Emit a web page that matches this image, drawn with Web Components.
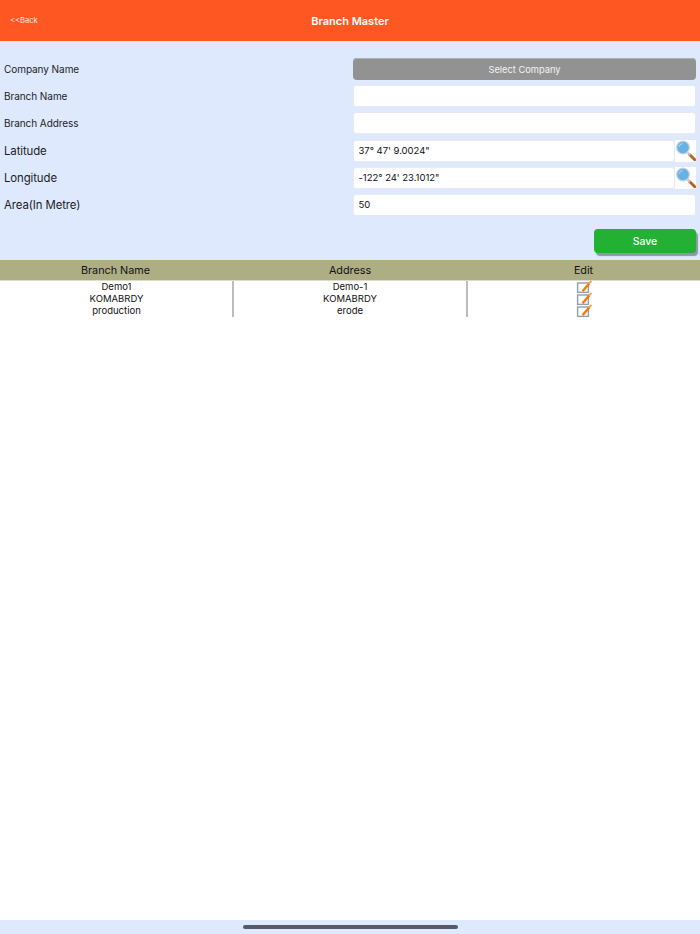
<!DOCTYPE html>
<html><head><meta charset="utf-8"><style>
html,body{margin:0;padding:0;height:100%}
body{font-family:Inter,"Liberation Sans",sans-serif;background:#fff}
</style></head><body>
<app-shell>
<top-bar slot="top" title="Branch Master" back="&lt;&lt;Back"></top-bar>
<form-panel slot="form">
<form-row label="Company Name"><pick-button>Select Company</pick-button></form-row>
<form-row label="Branch Name"><text-box></text-box></form-row>
<form-row label="Branch Address"><text-box></text-box></form-row>
<form-row label="Latitude" big><text-box value="37° 47' 9.0024&quot;" search></text-box></form-row>
<form-row label="Longitude" big><text-box value="-122° 24' 23.1012&quot;" search></text-box></form-row>
<form-row label="Area(In Metre)" big><text-box value="50"></text-box></form-row>
<save-button>Save</save-button>
</form-panel>
<branch-table slot="table"></branch-table>
<home-bar slot="bottom"></home-bar>
</app-shell>
<script>
function def(name,css,html){
  customElements.define(name,class extends HTMLElement{
    connectedCallback(){
      if(this.shadowRoot)return;
      const r=this.attachShadow({mode:'open'});
      r.innerHTML='<style>'+css+'</style>'+(typeof html==='function'?html(this):html);
    }
  });
}
def('app-shell',':host{display:flex;flex-direction:column;height:934px;width:700px;overflow:hidden}.m{flex:1;background:#fff;display:flex;flex-direction:column}',
 '<slot name="top"></slot><slot name="form"></slot><div class="m"><slot name="table"></slot></div><slot name="bottom"></slot>');
def('top-bar',':host{display:grid;grid-template-columns:1fr auto 1fr;align-items:center;height:41px;background:#FF5722;color:#fff}.b{font-size:7.6px;padding-left:10px;color:#ffe9e0}.t{font-size:11px;font-weight:600}',
 e=>`<div class="b">${e.getAttribute('back').replace('<','&lt;').replace('<','&lt;')}</div><div class="t">${e.getAttribute('title')}</div><div></div>`);
def('form-panel',':host{display:flex;flex-direction:column;background:#DEE9FD;padding:17px 4px 6.9px;gap:5.2px}',
 '<slot></slot>');
def('form-row',':host{display:grid;grid-template-columns:349px 1fr;align-items:center;height:22px;color:#1c1c1e}.l{font-size:10px;letter-spacing:-.06px}:host([big]) .l{font-size:11.4px;letter-spacing:-.1px;padding-top:1px}',
 e=>`<div class="l">${e.getAttribute('label')}</div><div><slot></slot></div>`);
def('pick-button',':host{display:flex;align-items:center;justify-content:center;height:22px;border-radius:4px;background:#929292;color:#f2f2f2;font-size:9.3px;box-shadow:inset 0 1px 0 #a8b0bc}','<slot></slot>');
const glass=`<svg width="20" height="22" viewBox="0 0 20 22"><path d="M13.5 14.5L18.8 19.8" stroke="#b5601f" stroke-width="2.8" stroke-linecap="round"/><path d="M11.5 12.5L14 15" stroke="#c4c4c4" stroke-width="2.2"/><circle cx="7" cy="7.5" r="6.3" fill="#67b1e4" stroke="#c2d2df" stroke-width="1.2"/><path d="M3.2 7a4 4 0 0 1 3.6-3.4" stroke="#9ed0f1" stroke-width="1.2" fill="none"/></svg>`;
def('text-box',':host{display:flex;height:22px;font-size:9.5px;letter-spacing:-.03px;color:#111}.f{flex:1;min-width:0;background:#fff;border-radius:3px;border:1px solid #e6ebf3;box-sizing:border-box;display:flex;align-items:center;padding-left:4.5px}.s{width:21px;background:#fff;display:flex;align-items:flex-start;justify-content:flex-end;overflow:visible}svg{flex:none}',
 e=>`<div class="f">${e.getAttribute('value')||''}</div>${e.hasAttribute('search')?`<div class="s">${glass}</div>`:''}`);
def('save-button',':host{align-self:flex-end;display:flex;align-items:center;justify-content:center;width:102px;height:24px;margin-top:7.95px;border-radius:4px;background:#22B133;color:#fff;font-size:10.5px;font-weight:500;box-shadow:2px 3px 1px #8d95a8}','<slot></slot>');
const edit=`<svg width="16" height="12" viewBox="0 0 16 12" style="display:block;overflow:visible"><rect x="1.6" y="2" width="10.8" height="9.4" fill="#fbfcfc" stroke="#8fa1ab" stroke-width="1.4"/><path d="M6.6 10.2L13.4 2.2" stroke="#f5780f" stroke-width="2.4"/><path d="M13.2 2.4L15.4 -.2" stroke="#f9a040" stroke-width="1.8"/></svg>`;
def('branch-table',':host{display:block;font-size:9.5px;color:#111}.h{display:grid;grid-template-columns:233px 234px 233px;box-sizing:border-box;height:21px;padding-top:1px;background:#AEAE85;font-size:10.8px;font-weight:400;align-items:center;text-align:center;color:#111;border-bottom:1px solid #dcdcc8}.h div:first-child{padding-right:2px}.b{display:grid;grid-template-columns:233px 233px 234px;text-align:center}.c{line-height:12px;height:36px}.c+.c{border-left:2px solid #bdbdbd;box-sizing:border-box}.c:nth-child(2){margin-left:-1px}.i{display:flex;flex-direction:column;align-items:center}.i svg{height:12px}',
 `<div class="h"><div>Branch Name</div><div>Address</div><div>Edit</div></div><div class="b"><div class="c">Demo1<br>KOMABRDY<br>production</div><div class="c">Demo-1<br>KOMABRDY<br>erode</div><div class="c i">${edit}${edit}${edit}</div></div>`);
def('home-bar',':host{display:flex;align-items:flex-start;justify-content:center;height:14px;background:#DEE9FD}div{width:215px;height:4px;margin-top:5px;border-radius:2px;background:#565a68}','<div></div>');
</script></body></html>
